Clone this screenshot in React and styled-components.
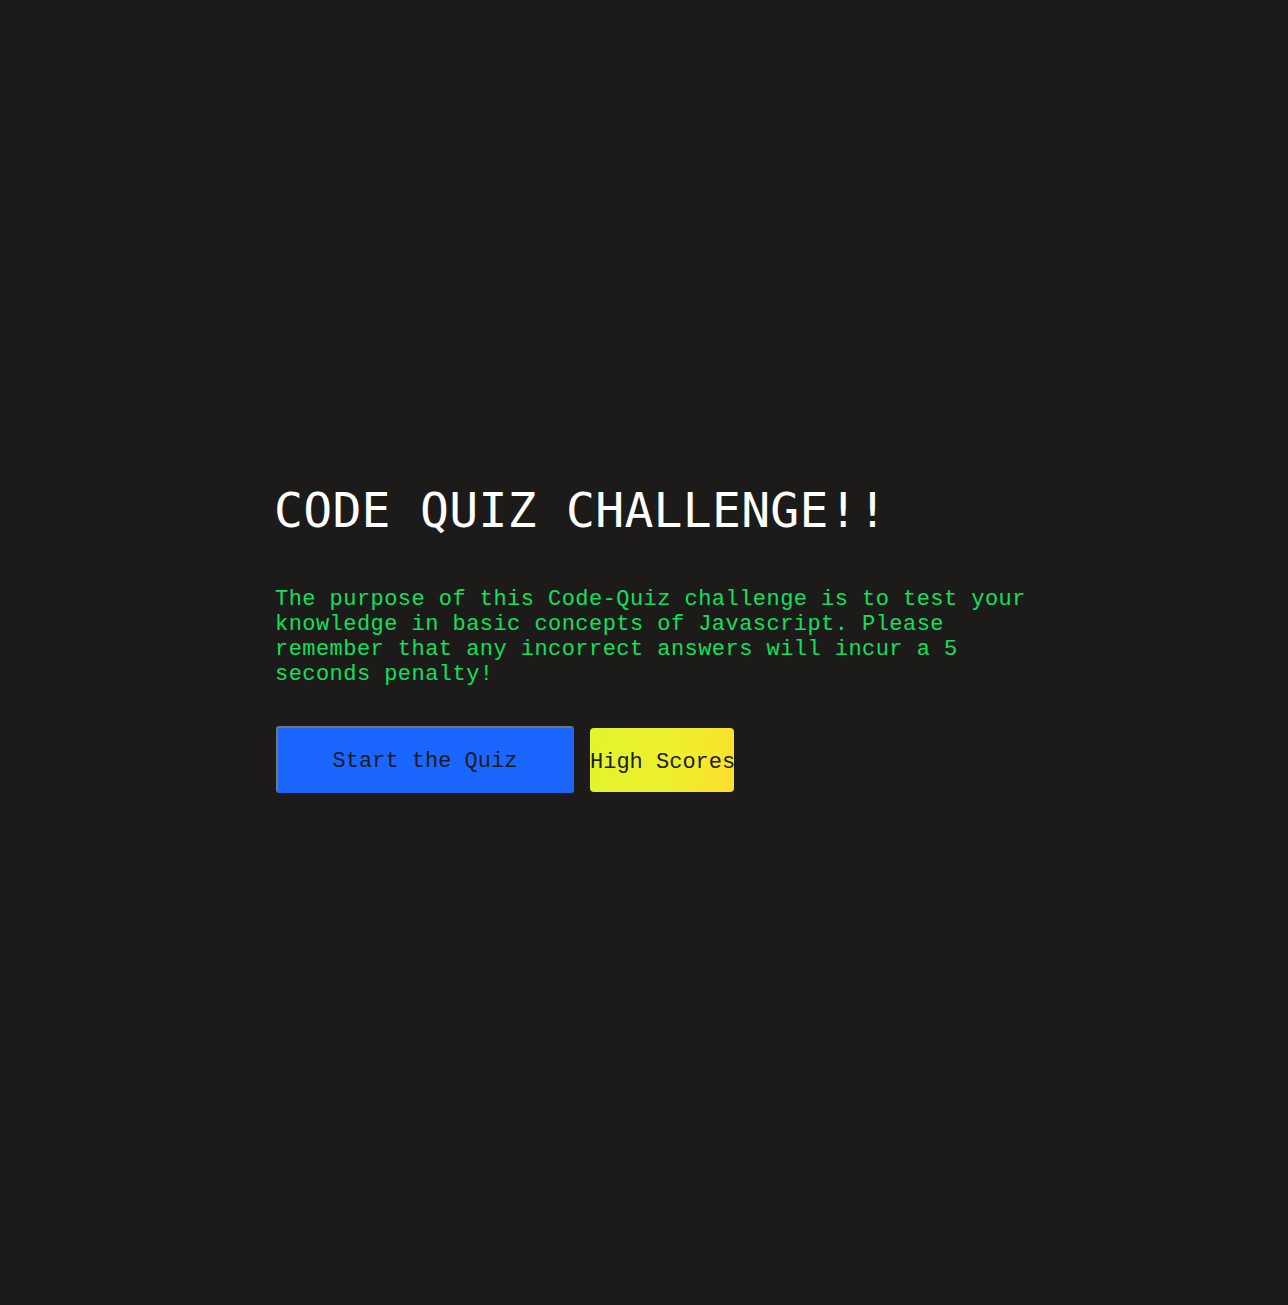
import React from "react";
import styled, { createGlobalStyle } from "styled-components";

const GlobalStyle = createGlobalStyle`
  html, body {
    margin: 0;
    padding: 0;
    background: #1c1b1a;
  }
  body {
    font-family: "Liberation Mono", "DejaVu Sans Mono", monospace;
  }
`;

const Page = styled.main`
  min-height: 1305px;
  box-sizing: border-box;
  padding: 478px 0 0 274px;
`;

const Intro = styled.section`
  width: 770px;
  display: flex;
  flex-direction: column;
  align-items: flex-start;
`;

const Title = styled.h1`
  margin: 0;
  font-family: "DejaVu Sans Mono", monospace;
  font-weight: 400;
  font-size: 48px;
  line-height: 64px;
  color: #ffffff;
  letter-spacing: 0.3px;
`;

const Description = styled.p`
  margin: 45px 0 0 1px;
  font-size: 22px;
  line-height: 25px;
  letter-spacing: 0.45px;
  color: #10e05c;
`;

const Actions = styled.div`
  margin-top: 39px;
  display: flex;
  align-items: flex-start;
  gap: 16px;
`;

const Button = styled.button`
  font-family: "Liberation Mono", monospace;
  font-size: 22px;
  color: #1d1c1c;
  cursor: pointer;
  padding: 4px 0 0;
  margin: 0;
`;

const StartButton = styled(Button)`
  width: 298px;
  height: 67px;
  margin-left: 2px;
  background: #1a66ff;
  border: 2px solid;
  border-color: #767676 #1a66ff #1a66ff #767676;
  border-radius: 3px;
`;

const ScoresButton = styled(Button)`
  width: 144px;
  height: 64px;
  margin-top: 2px;
  border: none;
  border-radius: 4px;
  white-space: nowrap;
  overflow: visible;
  background: linear-gradient(100deg, #e2f52c 0%, #eef02c 55%, #fde02c 100%);
`;

export default function App() {
  return (
    <>
      <GlobalStyle />
      <Page>
        <Intro>
          <Title>CODE QUIZ CHALLENGE!!</Title>
          <Description>
            The purpose of this Code-Quiz challenge is to test your knowledge
            in basic concepts of Javascript. Please remember that any incorrect
            answers will incur a 5 seconds penalty!
          </Description>
          <Actions>
            <StartButton>Start the Quiz</StartButton>
            <ScoresButton>High Scores</ScoresButton>
          </Actions>
        </Intro>
      </Page>
    </>
  );
}
